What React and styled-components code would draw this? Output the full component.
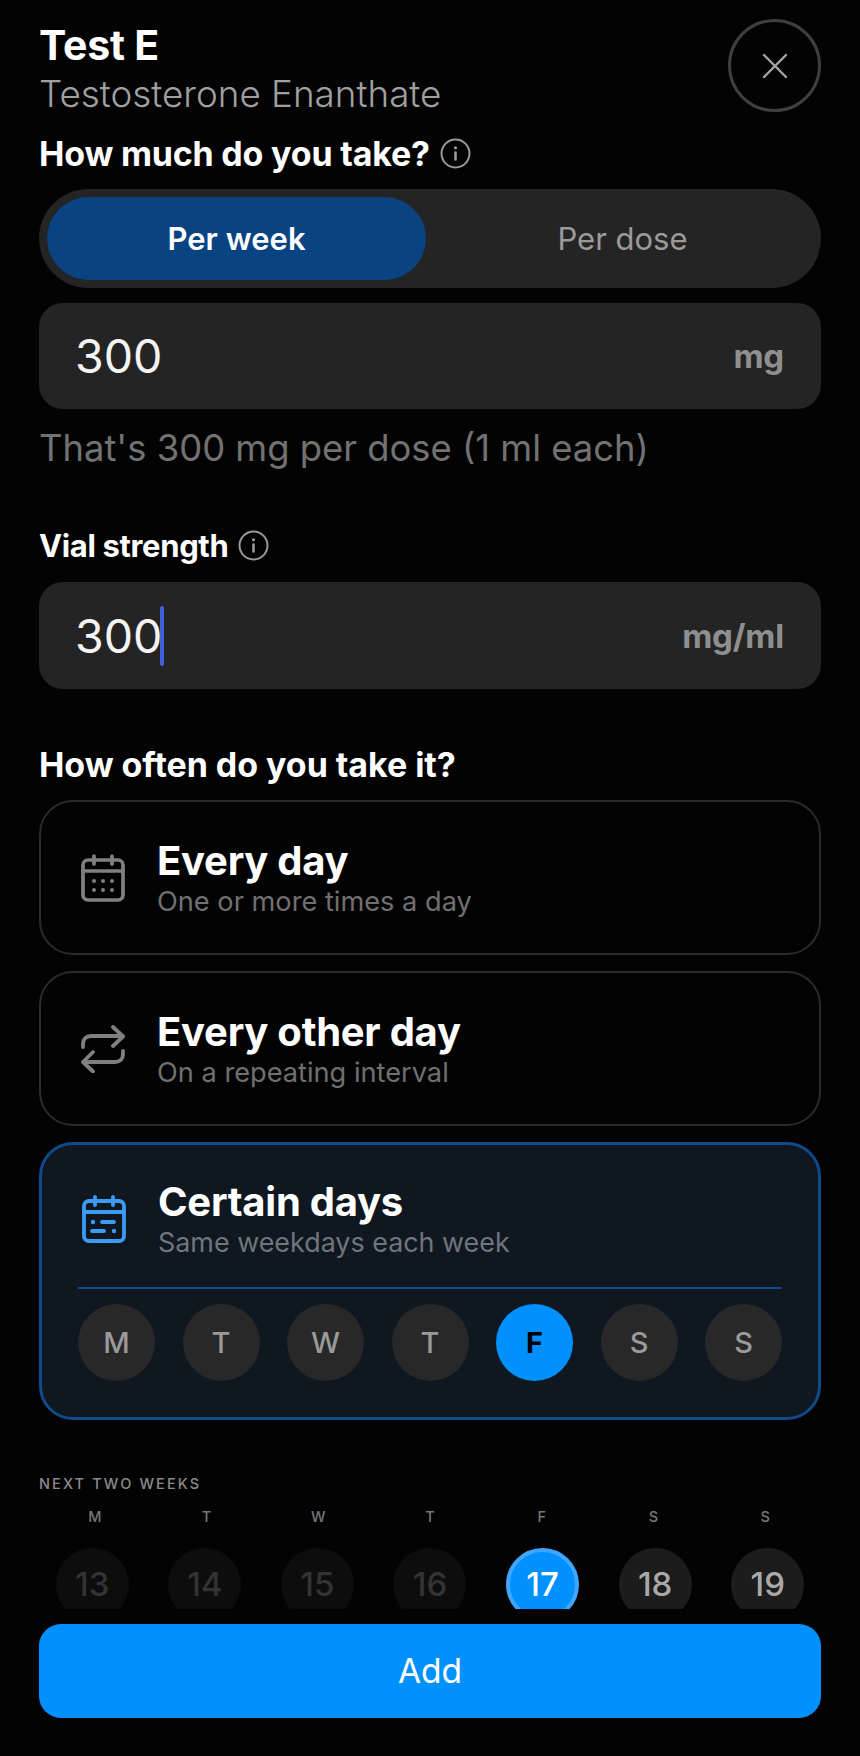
import React from "react";
import styled, { createGlobalStyle } from "styled-components";

const Global = createGlobalStyle`
  html, body { margin: 0; padding: 0; background: #030303; }
  * { box-sizing: border-box; }
`;

const Page = styled.div`
  width: 860px;
  height: 1756px;
  display: flex;
  flex-direction: column;
  overflow: hidden;
  background: #030303;
  font-family: Inter, "Noto Sans", sans-serif;
  color: #fff;
`;
const Scroll = styled.main`
  flex: 1;
  min-height: 0;
  overflow: hidden;
  padding: 19px 39px 0;
  display: flex;
  flex-direction: column;
`;
const Header = styled.header`
  display: flex;
  justify-content: space-between;
  align-items: flex-start;
  flex: none;
  height: 93px;
`;
const Titles = styled.div`
  display: flex;
  flex-direction: column;
`;
const Title = styled.h1`
  margin: 0;
  font-size: 41px;
  line-height: 52px;
  font-weight: 700;
  letter-spacing: -0.2px;
`;
const Subtitle = styled.div`
  font-size: 36.8px;
  line-height: 46px;
  font-weight: 300;
  color: #a0a0a0;
`;
const Close = styled.button`
  width: 93px;
  height: 93px;
  border-radius: 50%;
  border: 3px solid #3f3f3f;
  background: transparent;
  display: flex;
  align-items: center;
  justify-content: center;
  padding: 0;
  color: #a6a6a6;
`;
const Label = styled.div`
  display: flex;
  align-items: center;
  gap: 10px;
  flex: none;
  margin-top: ${(p) => p.$top}px;
  height: 40px;
  font-size: ${(p) => p.$size || 34}px;
  font-weight: 700;
  letter-spacing: ${(p) => p.$track ?? -0.2}px;
  color: #fff;
`;
const Toggle = styled.div`
  display: flex;
  flex: none;
  margin-top: 16px;
  height: 99px;
  padding: 8px;
  border-radius: 50px;
  background: #242424;
`;
const ActiveSegment = styled.div`
  flex: none;
  width: 379px;
  display: flex;
  align-items: center;
  justify-content: center;
  border-radius: 42px;
  font-size: 31px;
  font-weight: 600;
  color: #fff;
  background: #0a4382;
`;
const Segment = styled.div`
  flex: 1;
  display: flex;
  align-items: center;
  justify-content: center;
  padding-left: 6px;
  font-size: 31px;
  font-weight: 400;
  color: #9a9a9a;
`;
const Field = styled.div`
  display: flex;
  flex: none;
  align-items: center;
  justify-content: space-between;
  margin-top: ${(p) => p.$top}px;
  height: ${(p) => p.$h}px;
  padding: 0 37px 0 36px;
  border-radius: 24px;
  background: #242424;
`;
const FieldValue = styled.div`
  display: flex;
  align-items: center;
  font-size: 46.5px;
  font-weight: 400;
  color: #f4f4f4;
`;
const Caret = styled.span`
  width: 4px;
  height: 60px;
  margin-left: -2px;
  background: #3f62dc;
  border-radius: 2px;
`;
const Unit = styled.div`
  font-size: 33px;
  font-weight: 700;
  letter-spacing: -0.2px;
  color: #8f8f8f;
`;
const Helper = styled.div`
  flex: none;
  margin-top: 17px;
  font-size: 36.4px;
  line-height: 44px;
  font-weight: 400;
  color: #727272;
`;
const Options = styled.div`
  display: flex;
  flex: none;
  flex-direction: column;
  gap: 16px;
  margin-top: 16px;
`;
const Card = styled.div`
  height: 155px;
  padding: 0 40px;
  display: flex;
  align-items: center;
  gap: 32px;
  border: 2px solid #2b2b2b;
  border-radius: 34px;
`;
const ActiveCard = styled.div`
  height: 278px;
  padding: 34px 36px 35px;
  display: flex;
  flex-direction: column;
  border: 3px solid #0f4a8a;
  border-radius: 34px;
  background: #0f1820;
`;
const ActiveRow = styled.div`
  display: flex;
  align-items: center;
  gap: 32px;
  padding-left: 4px;
`;
const CardText = styled.div`
  display: flex;
  flex-direction: column;
`;
const CardTitle = styled.div`
  font-size: 40px;
  line-height: 46px;
  font-weight: 700;
  letter-spacing: -0.25px;
  color: #fff;
`;
const CardSub = styled.div`
  margin-top: 1px;
  font-size: ${(p) => p.$size || 27.2}px;
  line-height: 33px;
  font-weight: 400;
  color: ${(p) => p.$c || "#707070"};
`;
const Divider = styled.div`
  height: 2px;
  margin-top: 28px;
  background: #0f4a8a;
`;
const Days = styled.div`
  display: flex;
  justify-content: space-between;
  margin-top: 15px;
`;
const Day = styled.div`
  width: 77px;
  height: 77px;
  border-radius: 50%;
  display: flex;
  align-items: center;
  justify-content: center;
  font-size: 29px;
  font-weight: ${(p) => (p.$on ? 700 : 500)};
  color: ${(p) => (p.$on ? "#000" : "#9a9a9a")};
  background: ${(p) => (p.$on ? "#0091ff" : "#282828")};
`;
const Next = styled.div`
  flex: none;
  margin-top: 54px;
  height: 20px;
  font-size: 14.5px;
  line-height: 20px;
  letter-spacing: 2.1px;
  font-weight: 500;
  color: #8a8a8a;
`;
const WeekHead = styled.div`
  display: grid;
  flex: none;
  grid-template-columns: repeat(7, 1fr);
  margin-top: 13px;
`;
const HeadCell = styled.div`
  height: 20px;
  text-align: center;
  font-size: 14.5px;
  line-height: 20px;
  font-weight: 500;
  color: #777;
`;
const Dates = styled.div`
  display: grid;
  flex: none;
  grid-template-columns: repeat(7, 1fr);
  justify-items: center;
  margin: 21px -3px 0;
`;
const DateCell = styled.div`
  width: 73px;
  height: 73px;
  padding-bottom: 1px;
  border-radius: 50%;
  display: flex;
  align-items: center;
  justify-content: center;
  font-size: 33px;
  font-weight: 500;
  color: ${(p) => (p.$kind === "past" ? "#333" : p.$kind === "today" ? "#fff" : "#a8a8a8")};
  background: ${(p) => (p.$kind === "past" ? "#0d0d0d" : p.$kind === "today" ? "#0091ff" : "#1c1c1c")};
  border: ${(p) => (p.$kind === "today" ? "4px solid #3fa5ff" : "none")};
`;
const Footer = styled.footer`
  flex: none;
  padding: 15px 39px 38px;
  background: #030303;
`;
const AddButton = styled.button`
  width: 100%;
  height: 94px;
  border: none;
  border-radius: 22px;
  background: #0091ff;
  color: #fff;
  font-family: inherit;
  font-size: 33.5px;
  font-weight: 400;
`;
const IconBox = styled.svg`
  flex: none;
  display: block;
`;

const InfoIcon = () => (
  <IconBox width="31" height="31" viewBox="0 0 31 31" fill="none" stroke="#9a9a9a" strokeWidth="2">
    <circle cx="15.5" cy="15.5" r="14" />
    <path d="M15.5 14.5v7" strokeLinecap="round" strokeWidth="2.6" />
    <circle cx="15.5" cy="9.8" r="1.6" fill="#9a9a9a" stroke="none" />
  </IconBox>
);
const XIcon = () => (
  <IconBox width="28" height="28" viewBox="0 0 28 28" fill="none" stroke="currentColor" strokeWidth="2.4" strokeLinecap="round">
    <path d="M3 3l22 22M25 3L3 25" />
  </IconBox>
);
const CalendarDots = () => (
  <IconBox width="44" height="48" viewBox="0 0 44 48" fill="none" stroke="#808080" strokeWidth="3.7" strokeLinecap="round">
    <rect x="2" y="6" width="40" height="40" rx="5" />
    <path d="M2 17h40M13 2v8M31 2v8" />
    <g fill="#808080" stroke="none">
      {[13, 22, 31].map((x) => <circle key={x} cx={x} cy="27" r="2" />)}
      {[13, 22, 31].map((x) => <circle key={x} cx={x} cy="36" r="2" />)}
    </g>
  </IconBox>
);
const RepeatIcon = () => (
  <IconBox width="44" height="48" viewBox="0 0 44 48" fill="none" stroke="#808080" strokeWidth="3.8" strokeLinecap="round" strokeLinejoin="round">
    <path d="M2 22v-3c0-5 3-8 8-8h32M32 2l10 9.5L32 21" />
    <path d="M42 26v3c0 5-3 8-8 8H2M12 27L2 37l10 9.5" />
  </IconBox>
);
const CalendarLines = () => (
  <IconBox width="44" height="48" viewBox="0 0 44 48" fill="none" stroke="#3b9bf5" strokeWidth="3.8" strokeLinecap="round">
    <rect x="2" y="6" width="40" height="40" rx="5" />
    <path d="M2 17h40M20 27h12M10 36h12" />
    <path d="M13 2v8M31 2v8" />
    <g fill="#3b9bf5" stroke="none">
      <circle cx="11" cy="27" r="2.2" />
      <circle cx="32" cy="36" r="2.2" />
    </g>
  </IconBox>
);

const weekdays = ["M", "T", "W", "T", "F", "S", "S"];
const dates = [
  ["13", "past"], ["14", "past"], ["15", "past"], ["16", "past"],
  ["17", "today"], ["18", "next"], ["19", "next"],
];

export default function App() {
  return (
    <Page>
      <Global />
      <Scroll>
        <Header>
          <Titles>
            <Title>Test E</Title>
            <Subtitle>Testosterone Enanthate</Subtitle>
          </Titles>
          <Close aria-label="Close"><XIcon /></Close>
        </Header>
        <Label $top={21}>How much do you take? <InfoIcon /></Label>
        <Toggle>
          <ActiveSegment>Per week</ActiveSegment>
          <Segment>Per dose</Segment>
        </Toggle>
        <Field $top={15} $h={106}>
          <FieldValue>300</FieldValue>
          <Unit>mg</Unit>
        </Field>
        <Helper>That's 300 mg per dose (1 ml each)</Helper>
        <Label $top={55} $size={31} $track={-0.35}>Vial strength <InfoIcon /></Label>
        <Field $top={17} $h={107}>
          <FieldValue>300<Caret /></FieldValue>
          <Unit>mg/ml</Unit>
        </Field>
        <Label $top={55} $track={-0.05}>How often do you take it?</Label>
        <Options>
          <Card>
            <CalendarDots />
            <CardText>
              <CardTitle>Every day</CardTitle>
              <CardSub>One or more times a day</CardSub>
            </CardText>
          </Card>
          <Card>
            <RepeatIcon />
            <CardText>
              <CardTitle>Every other day</CardTitle>
              <CardSub>On a repeating interval</CardSub>
            </CardText>
          </Card>
          <ActiveCard>
            <ActiveRow>
              <CalendarLines />
              <CardText>
                <CardTitle>Certain days</CardTitle>
                <CardSub $c="#6f757b" $size={26.9}>Same weekdays each week</CardSub>
              </CardText>
            </ActiveRow>
            <Divider />
            <Days>
              {weekdays.map((d, i) => <Day key={i} $on={i === 4}>{d}</Day>)}
            </Days>
          </ActiveCard>
        </Options>
        <Next>NEXT TWO WEEKS</Next>
        <WeekHead>
          {weekdays.map((d, i) => <HeadCell key={i}>{d}</HeadCell>)}
        </WeekHead>
        <Dates>
          {dates.map(([n, k]) => <DateCell key={n} $kind={k}>{n}</DateCell>)}
        </Dates>
      </Scroll>
      <Footer>
        <AddButton>Add</AddButton>
      </Footer>
    </Page>
  );
}
